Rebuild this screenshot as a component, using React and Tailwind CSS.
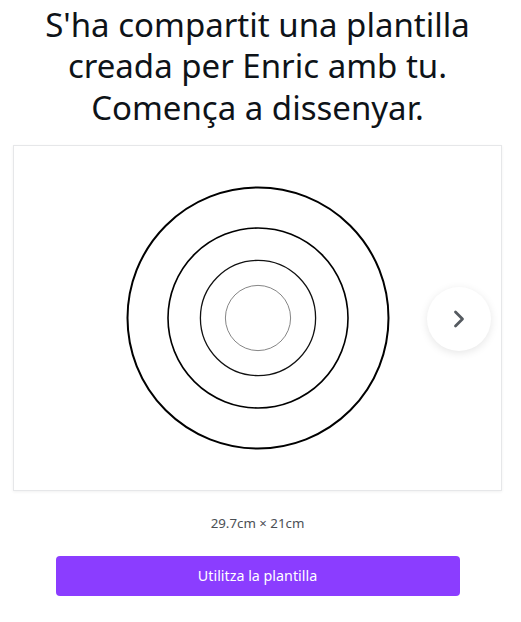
import { ChevronRight } from 'lucide-react'

const Target = () => (
  <svg width="270" height="270" viewBox="0 0 270 270" fill="none">
    <circle cx="135" cy="135" r="130.5" stroke="#000" strokeWidth="2" />
    <circle cx="135" cy="135" r="90" stroke="#000" strokeWidth="1.6" />
    <circle cx="135" cy="135" r="57.6" stroke="#111" strokeWidth="1.3" />
    <circle cx="135" cy="135" r="32.6" stroke="#666" strokeWidth="0.8" />
  </svg>
)

export default function App() {
  return (
    <div className="w-[521px] h-[622px] bg-white font-['Noto_Sans',sans-serif] text-[#0e1318]">
      <div className="ml-[13px] w-[489px] flex flex-col items-center pt-[3.5px]">
        {/* Title */}
        <h1 className="text-center text-[33px] leading-[41.5px] font-normal">
          S'ha compartit una plantilla
          <br />
          creada per Enric amb tu.
          <br />
          Comença a dissenyar.
        </h1>

        {/* Template preview */}
        <div className="relative mt-[17px] w-[489px] h-[346px] bg-white border border-[#e6e7e9] shadow-[0_1px_3px_rgba(0,0,0,0.06)] flex items-center justify-center">
          <Target />
          <button className="absolute right-[10px] top-[141px] w-16 h-16 rounded-full bg-white shadow-[0_2px_8px_rgba(0,0,0,0.1)] flex items-center justify-center">
            <ChevronRight className="w-7 h-7 text-[#555a60]" strokeWidth={2.4} />
          </button>
        </div>

        {/* Size */}
        <p className="mt-[22px] text-[13.3px] leading-5 text-[#4b4f54]">29.7cm × 21cm</p>

        {/* CTA */}
        <button className="mt-[23px] w-[404px] h-10 rounded-[4px] bg-[#8b3dff] text-white text-[14.3px]">
          Utilitza la plantilla
        </button>
      </div>
    </div>
  )
}
